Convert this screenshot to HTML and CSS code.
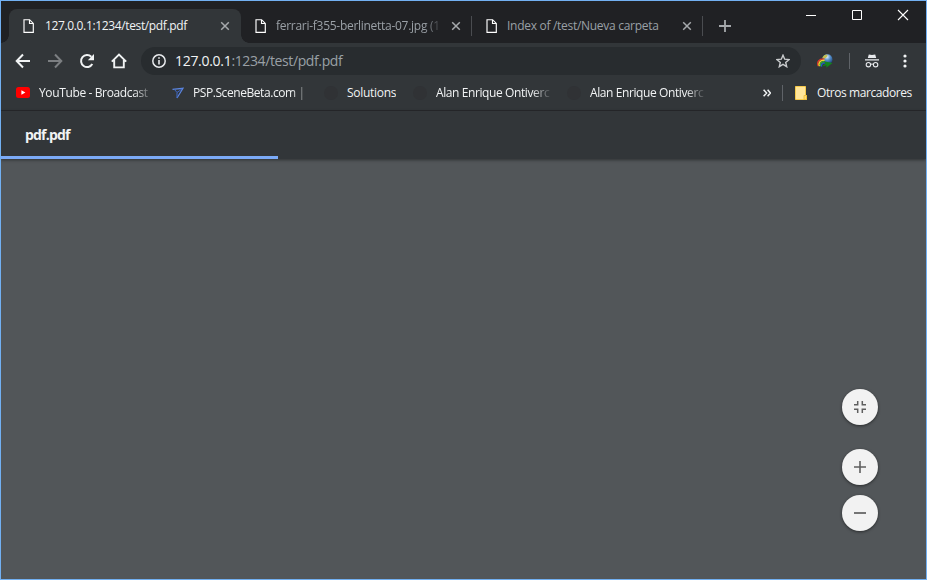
FILE: index.html
```html
<!DOCTYPE html>
<html lang="es">
<head>
<meta charset="utf-8">
<title>pdf.pdf</title>
<link rel="stylesheet" href="styles.css">
</head>
<body>
<svg width="0" height="0" class="defs">
  <symbol id="page" viewBox="0 0 11 14"><path d="M1 .7h5.6L10.3 4.4v8.9H1zM6.5 1v3.5H10" fill="none" stroke="#fff" stroke-width="1.15"/></symbol>
  <symbol id="close" viewBox="0 0 10 10"><path d="M1.2 1.2l7.6 7.6M8.8 1.2L1.2 8.8" fill="none" stroke="#a6a9ac" stroke-width="1.5"/></symbol>
</svg>
<div class="window">
  <header class="strip">
    <div class="tab active"><svg class="page"><use href="#page"/></svg><span class="title"><span class="t1">127.0.0.1:1234/test/pdf.pdf</span></span><svg class="close"><use href="#close"/></svg></div>
    <div class="tab sep"><svg class="page"><use href="#page"/></svg><span class="title fade"><span class="t2">ferrari-f355-berlinetta-07.jpg (1</span></span><svg class="close"><use href="#close"/></svg></div>
    <div class="tab sep"><svg class="page"><use href="#page"/></svg><span class="title"><span class="t3">Index of /test/Nueva carpeta</span></span><svg class="close"><use href="#close"/></svg></div>
    <svg class="plus" viewBox="0 0 12 12"><path d="M6 0v12M0 6h12" stroke="#a6a9ac" stroke-width="1.8"/></svg>
    <div class="controls">
      <svg viewBox="0 0 46 30"><path d="M18 14.5h10" stroke="#fff"/></svg>
      <svg viewBox="0 0 46 30"><path d="M18.5 9.5h9v9h-9z" fill="none" stroke="#fff"/></svg>
      <svg viewBox="0 0 46 30"><path d="M18 9l10 10M28 9L18 19" stroke="#fff" stroke-width="1.1"/></svg>
    </div>
  </header>
  <nav class="toolbar">
    <svg class="nav" viewBox="0 0 16 16"><path d="M15 8H2M8 1.5L1.7 8 8 14.5" fill="none" stroke="#f1f3f4" stroke-width="2"/></svg>
    <svg class="nav" viewBox="0 0 16 16"><path d="M1 8h13M8 1.5L14.3 8 8 14.5" fill="none" stroke="#7c7f82" stroke-width="2"/></svg>
    <svg class="nav" viewBox="0 0 16 16"><path d="M13.3 11A6 6 0 1 1 12.3 3.8" fill="none" stroke="#f1f3f4" stroke-width="2"/><path d="M15 1v6.2H8.8z" fill="#f1f3f4"/></svg>
    <svg class="nav" viewBox="0 0 16 16"><path d="M.8 8.6L8 1.5l7.2 7.1M3.2 7v7.4h9.6V7" fill="none" stroke="#f1f3f4" stroke-width="1.9"/></svg>
    <div class="omnibox">
      <svg class="info" viewBox="0 0 14 14"><circle cx="7" cy="7" r="6.2" fill="none" stroke="#e8eaed" stroke-width="1.5"/><path d="M7 3.2v1.5M7 6v4.5" stroke="#e8eaed" stroke-width="1.6"/></svg>
      <span class="url"><b>127.0.0.1</b>:1234/test/pdf.pdf</span>
      <svg class="star" viewBox="0 0 14 14"><path d="M7 1.2l1.7 4 4.3.4-3.3 2.8 1 4.3L7 10.4l-3.7 2.3 1-4.3L1 5.6l4.3-.4z" fill="none" stroke="#c9cbcd" stroke-width="1.4"/></svg>
    </div>
    <svg class="ext" viewBox="0 0 16 14">
      <defs><radialGradient id="globe" cx=".45" cy=".25" r=".75"><stop offset="0" stop-color="#e6f2ff"/><stop offset=".45" stop-color="#568fcb"/><stop offset="1" stop-color="#153d72"/></radialGradient></defs>
      <circle cx="10.4" cy="5.4" r="5.1" fill="url(#globe)"/>
      <path d="M5.3 3.6L7.2 1.2 10 .5l.6 1.4-1.7 2-2.3.8z" fill="#c2bf52"/>
      <path d="M1.3 12C-.4 7.5 2.2 4.6 7.4 5" fill="none" stroke="#d9382c" stroke-width="1.5"/>
      <path d="M2.5 12.3C1 9 3 6 7.6 6.3" fill="none" stroke="#f3d329" stroke-width="1.5"/>
      <path d="M3.8 12.2C2.4 9.8 4.2 7.6 7.6 7.8" fill="none" stroke="#2fa838" stroke-width="1.5"/>
      <path d="M4.5 12.6C4 10.5 5.5 9 8 9" fill="none" stroke="#245ec4" stroke-width="1.2"/>
      <path d="M6.5 7.3l9 1.6-6.2 4.8.2-2.4-4.6 1.2 3.6-3z" fill="#12851b"/>
    </svg>
    <i class="divider"></i>
    <svg class="incognito" viewBox="0 0 14 14"><path d="M3.8.5l3.2.6 3.2-.6 1 3.5H2.8zM0 5.2h14v1.3H0z" fill="#e8eaed"/><circle cx="3.4" cy="10.7" r="2.2" fill="none" stroke="#e8eaed" stroke-width="1.1"/><circle cx="10.6" cy="10.7" r="2.2" fill="none" stroke="#e8eaed" stroke-width="1.1"/><path d="M5.6 10.4q1.4-.8 2.8 0" fill="none" stroke="#e8eaed"/></svg>
    <svg class="more" viewBox="0 0 4 14"><circle cx="2" cy="2" r="1.6" fill="#f1f3f4"/><circle cx="2" cy="7" r="1.6" fill="#f1f3f4"/><circle cx="2" cy="12" r="1.6" fill="#f1f3f4"/></svg>
  </nav>
  <nav class="bookmarks">
    <div class="mark m1"><svg class="yt" viewBox="0 0 14 11"><rect width="14" height="11" rx="2.5" fill="#f00"/><path d="M5.4 3.2L9.4 5.5 5.4 7.8z" fill="#fff"/></svg><span class="label"><span class="b1">YouTube - Broadcast</span></span></div>
    <div class="mark m2"><svg class="psp" viewBox="0 0 12 12"><path d="M.5 2.3L11 1.3 5 11" fill="none" stroke="#5c86e0" stroke-width="1.2"/><path d="M2.5 2.5L5 5.5V11M5 5.5L10 2" fill="none" stroke="#3f68c8" stroke-width="1"/></svg><span class="label"><span class="b2">PSP.SceneBeta.com |</span></span></div>
    <div class="mark m3"><i class="dark"></i><span class="label"><span class="b3">Solutions</span></span></div>
    <div class="mark m4"><i class="dark"></i><span class="label"><span class="b4">Alan Enrique Ontiverc</span></span></div>
    <div class="mark m5"><i class="dark"></i><span class="label"><span class="b4">Alan Enrique Ontiverc</span></span></div>
    <svg class="chevrons" viewBox="0 0 8 8"><path d="M.6.8L3.6 4l-3 3.2M4.6.8L7.4 4 4.6 7.2" fill="none" stroke="#f1f3f4" stroke-width="1.5"/></svg>
    <i class="divider"></i>
    <svg class="folder" viewBox="0 0 12 14"><path d="M.5.5h10v9h1v4H.5z" fill="#ffe59a" stroke="#f5c94a"/><path d="M9 9.5h2.5v4H9z" fill="#ffdc73" stroke="#efbd35" stroke-width=".8"/></svg>
    <span class="b6">Otros marcadores</span>
  </nav>
  <div class="pdfbar"><span class="doc">pdf.pdf</span><i class="progress"></i></div>
  <main class="viewer">
    <div class="zoom">
      <button class="fit"><svg viewBox="0 0 12 12"><path d="M0 3.7h3.7V0M8.3 0v3.7H12M0 8.3h3.7V12M12 8.3H8.3V12" fill="none" stroke="#5f5f5f" stroke-width="1.5"/></svg></button>
      <button><svg viewBox="0 0 12 12"><path d="M6 0v12M0 6h12" stroke="#5f5f5f" stroke-width="1.6"/></svg></button>
      <button><svg viewBox="0 0 12 12"><path d="M0 6h12" stroke="#5f5f5f" stroke-width="1.7"/></svg></button>
    </div>
  </main>
</div>
</body>
</html>
```
FILE: styles.css
```css
* { box-sizing: border-box; }
body { margin: 0; font: 12px/18px "Open Sans", "Noto Sans", sans-serif; color: #f1f3f4; background: #525659; }
svg { display: block; flex: none; }
.defs { position: absolute; }
.window { width: 927px; height: 580px; border: 1px solid #72b0f2; display: flex; flex-direction: column; overflow: hidden; }
.strip { height: 42px; background: #202124; display: flex; padding-left: 8px; flex: none; }
.tab { width: 231px; height: 34px; margin-top: 8px; padding-left: 14px; display: flex; align-items: center; color: #9aa0a6; position: relative; flex: none; }
.active { width: 232px; margin-right: -1px; background: #323639; border-radius: 8px 8px 0 0; color: #f1f3f4; }
.active::before, .active::after { content: ""; position: absolute; bottom: 0; width: 8px; height: 8px; }
.active::before { left: -8px; background: radial-gradient(circle at 0 0, transparent 7.5px, #323639 8px); }
.active::after { right: -8px; background: radial-gradient(circle at 100% 0, transparent 7.5px, #323639 8px); }
.sep { padding-left: 15px; }
.sep::after { content: ""; position: absolute; right: -1px; top: 7px; width: 1px; height: 20px; background: #4a4c50; }
.page { width: 11px; height: 14px; margin-right: 11px; }
.sep .page { margin-right: 10px; }
.title, .label { overflow: hidden; white-space: nowrap; flex: none; }
.title { width: 167px; }
.t1 { letter-spacing: -.36px; }
.t2 { letter-spacing: -.28px; }
.t3 { letter-spacing: -.29px; }
.fade { -webkit-mask-image: linear-gradient(to right, #000 148px, transparent 168px); mask-image: linear-gradient(to right, #000 148px, transparent 168px); }
.close { width: 10px; height: 10px; margin-left: 8px; }
.plus { width: 12px; height: 12px; margin: 19px 0 0 17px; }
.controls { display: flex; margin-left: auto; }
.controls svg { width: 46px; height: 30px; }
.toolbar { height: 35px; background: #323639; display: flex; align-items: center; padding-left: 14px; flex: none; }
.nav { width: 16px; height: 16px; margin-right: 16px; }
.nav:nth-child(4) { margin-right: 14px; }
.omnibox { width: 660px; height: 28px; border-radius: 14px; background: #282c2f; display: flex; align-items: center; padding: 0 11px; }
.info { width: 14px; height: 14px; margin-right: 9px; }
.url { font-size: 14px; line-height: 20px; color: #9aa0a6; letter-spacing: -.38px; white-space: nowrap; }
.url b { font-weight: 400; color: #f1f3f4; letter-spacing: -.3px; }
.star { width: 14px; height: 14px; margin-left: auto; }
.ext { width: 16px; height: 14px; margin-left: 16px; }
.divider { width: 1px; height: 16px; background: #5f6368; margin-left: 16px; }
.incognito { width: 14px; height: 14px; margin-left: 15px; }
.more { width: 4px; height: 14px; margin-left: 24px; }
.bookmarks { height: 33px; background: #323639; border-bottom: 1px solid #27292c; display: flex; align-items: center; padding: 0 14px 3px 15px; flex: none; }
.mark { display: flex; align-items: center; flex: none; }
.label { -webkit-mask-image: linear-gradient(to right, #000 calc(100% - 20px), transparent); mask-image: linear-gradient(to right, #000 calc(100% - 20px), transparent); }
.m1 { width: 156px; }
.m1 .label { width: 115px; }
.b1 { letter-spacing: -.37px; }
.yt { width: 14px; height: 11px; margin-right: 9px; }
.m2 { width: 152px; }
.m2 .label { width: 118px; }
.b2 { letter-spacing: -.43px; }
.psp { width: 12px; height: 12px; margin-right: 9px; }
.dark { width: 14px; height: 14px; border-radius: 7px; background: #303235; margin-right: 9px; }
.m3 { width: 89px; }
.m3 .label { -webkit-mask-image: none; mask-image: none; }
.b3 { letter-spacing: -.28px; }
.m4 { width: 154px; }
.m4 .label, .m5 .label { width: 116px; }
.b4 { letter-spacing: -.4px; }
.m5 { width: 196px; }
.chevrons { width: 8px; height: 8px; }
.bookmarks .divider { margin-left: 11px; }
.folder { width: 12px; height: 14px; margin: 0 10px 0 12px; }
.b6 { white-space: nowrap; letter-spacing: -.42px; }
.pdfbar { height: 48px; background: #323639; padding: 15px 24px; position: relative; z-index: 1; box-shadow: 0 1px 3px rgba(0,0,0,.45); flex: none; }
.doc { font-size: 14px; font-weight: 700; display: block; line-height: 18px; letter-spacing: -.8px; }
.progress { position: absolute; left: 0; bottom: 0; width: 277px; height: 3px; background: #7baaf7; }
.viewer { flex: 1; background: #525659; display: flex; justify-content: flex-end; align-items: flex-end; padding: 0 48px 48px 0; }
.zoom { display: flex; flex-direction: column; gap: 10px; }
.zoom button { width: 36px; height: 36px; border: 0; border-radius: 50%; padding: 12px; background: #f2f2f2; box-shadow: 0 1px 3px rgba(0,0,0,.5); }
.zoom .fit { margin-bottom: 14px; }
.zoom svg { width: 12px; height: 12px; }
```
